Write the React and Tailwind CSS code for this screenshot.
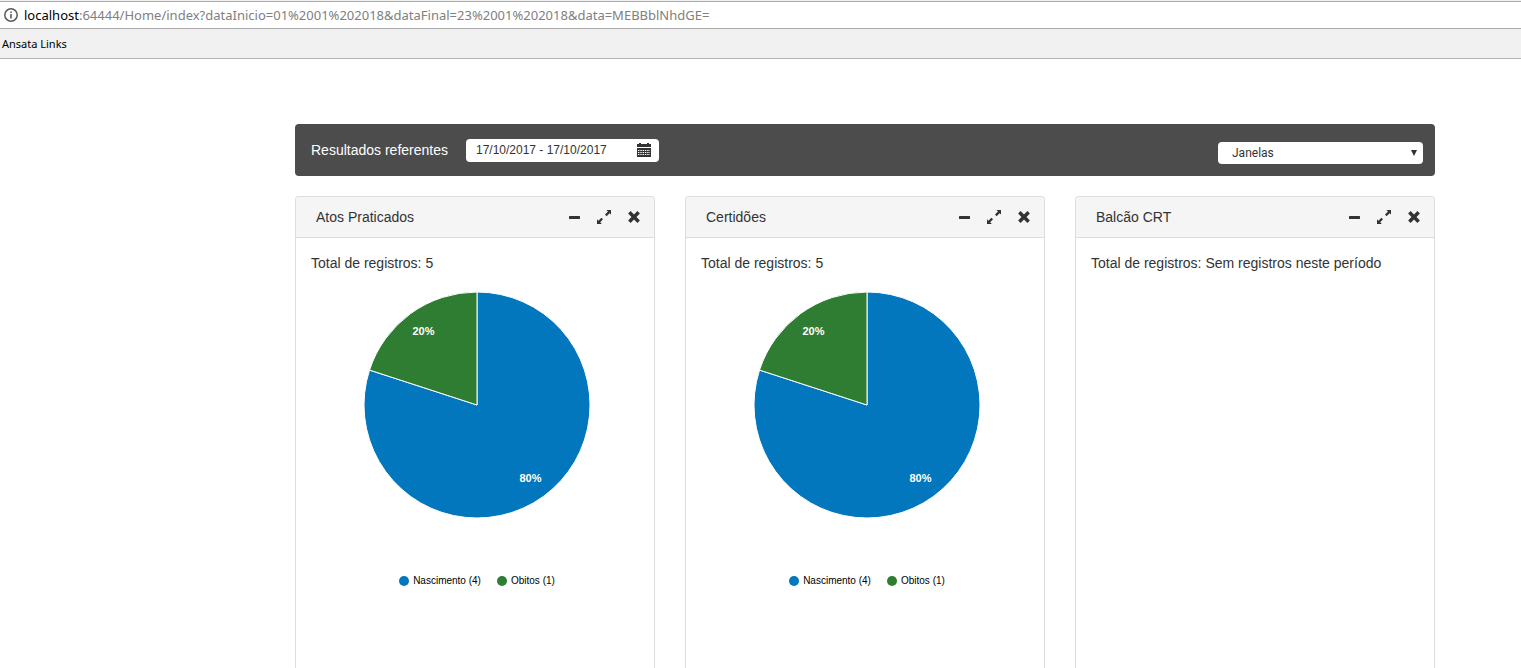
import { useState } from "react";

const COLORS = ["#0277bd", "#2e7d32"];

const registros = [
  { label: "Nascimento", total: 4 },
  { label: "Obitos", total: 1 },
];

const paineis = [
  { titulo: "Atos Praticados", dados: registros },
  { titulo: "Certidões", dados: registros },
  { titulo: "Balcão CRT", dados: [] },
];

const InfoIcon = () => (
  <svg viewBox="0 0 14 14" className="w-3.5 h-3.5 shrink-0" aria-hidden="true">
    <circle cx="7" cy="7" r="6.2" fill="none" stroke="#5a5a5a" strokeWidth="1.5" />
    <path d="M6.2 3.4h1.6V5H6.2zM6.2 6h1.6v4.6H6.2z" fill="#5a5a5a" />
  </svg>
);

const CalendarIcon = () => (
  <svg viewBox="0 0 14 14" className="w-3.5 h-3.5 shrink-0" aria-hidden="true">
    <path d="M0 1h2V0h2v1h6V0h2v1h2v3H0zM0 5h14v9H0z" fill="#333" />
    <path
      d="M1 7.5h12M1 9.5h12M1 11.5h12"
      stroke="#fff"
      strokeWidth="1"
      strokeDasharray="1.4 0.9"
    />
  </svg>
);

const MinusIcon = () => (
  <svg viewBox="0 0 14 14" className="w-3.5 h-3.5" aria-hidden="true">
    <rect x="2" y="6" width="11" height="3" rx="0.5" fill="#333" />
  </svg>
);

const ResizeIcon = () => (
  <svg viewBox="0 0 14 14" className="w-3.5 h-3.5" aria-hidden="true">
    <path
      d="M9.4 0H14v4.6l-1.4-1.4-3 3L8 4.6l3-3zM4.8 14H0V9.2l1.4 1.5 3-3L6 9.3l-2.8 3z"
      fill="#333"
    />
  </svg>
);

const CloseIcon = () => (
  <svg viewBox="0 0 14 14" className="w-3.5 h-3.5" aria-hidden="true">
    <path
      d="M3.6 1.1 7 4.5l3.4-3.4 2.5 2.5L9.5 7l3.4 3.4-2.5 2.5L7 9.5l-3.4 3.4-2.5-2.5L4.5 7 1.1 3.6z"
      fill="#333"
    />
  </svg>
);

const RAIO = 113;

const ponto = (fracao, raio) => {
  const angulo = fracao * 2 * Math.PI;
  return [RAIO + raio * Math.sin(angulo), RAIO - raio * Math.cos(angulo)];
};

const PieChart = ({ dados }) => {
  const soma = dados.reduce((acc, item) => acc + item.total, 0);
  let inicio = 0;

  const fatias = dados.map((item, i) => {
    const parte = item.total / soma;
    const [x1, y1] = ponto(inicio, RAIO);
    const [x2, y2] = ponto(inicio + parte, RAIO);
    const [tx, ty] = ponto(inicio + parte / 2, 91);
    inicio += parte;
    return {
      label: item.label,
      cor: COLORS[i],
      d: `M${RAIO} ${RAIO}L${x1} ${y1}A${RAIO} ${RAIO} 0 ${parte > 0.5 ? 1 : 0} 1 ${x2} ${y2}Z`,
      tx,
      ty,
      texto: `${Math.round(parte * 100)}%`,
    };
  });

  return (
    <div className="flex flex-col items-center pl-1 pt-[19px]">
      <svg viewBox="0 0 226 226" className="w-[226px] h-[226px]" role="img" aria-label="Registros por tipo">
        {fatias.map((f) => (
          <path key={f.label} d={f.d} fill={f.cor} stroke="#fff" strokeWidth="1" />
        ))}
        {fatias.map((f) => (
          <text
            key={f.label}
            x={f.tx}
            y={Math.floor(f.ty + 4)}
            textAnchor="middle"
            fill="#fff"
            className="text-[11px] font-bold"
          >
            {f.texto}
          </text>
        ))}
      </svg>

      {/* Legenda */}
      <ul className="flex gap-4 mt-[54px] text-[10px] leading-[17px] text-black">
        {dados.map((item, i) => (
          <li key={item.label} className="flex items-center gap-1">
            <svg viewBox="0 0 10 10" className="w-2.5 h-2.5" aria-hidden="true">
              <circle cx="5" cy="5" r="5" fill={COLORS[i]} />
            </svg>
            {item.label} ({item.total})
          </li>
        ))}
      </ul>
    </div>
  );
};

const Panel = ({ titulo, dados }) => {
  const total = dados.reduce((acc, item) => acc + item.total, 0);

  return (
    <section className="flex-1 bg-white border border-b-0 border-[#ddd] rounded-t">
      <header className="flex items-center justify-between h-[41px] pl-5 pr-[13px] bg-[#f5f5f5] border-b border-[#ddd] rounded-t">
        <h2>{titulo}</h2>
        <div className="flex gap-4">
          <button type="button" aria-label="Minimizar">
            <MinusIcon />
          </button>
          <button type="button" aria-label="Expandir">
            <ResizeIcon />
          </button>
          <button type="button" aria-label="Fechar">
            <CloseIcon />
          </button>
        </div>
      </header>
      <div className="p-[15px]">
        <p>Total de registros: {total > 0 ? total : "Sem registros neste período"}</p>
        {total > 0 && <PieChart dados={dados} />}
      </div>
    </section>
  );
};

const App = () => {
  const [periodo, setPeriodo] = useState("17/10/2017 - 17/10/2017");

  return (
    <div className="flex flex-col h-screen overflow-hidden bg-white text-sm leading-5 text-[#333] font-['Liberation_Sans',Arial,sans-serif]">
      {/* Barra de endereço */}
      <div className="pt-px shrink-0 bg-[#f1f1f1]">
        <div className="flex items-center gap-1.5 h-7 pl-1 bg-white border-y border-[#aaa] font-['Noto_Sans',sans-serif] text-[13px] text-[#808080]">
          <InfoIcon />
          <p className="whitespace-nowrap">
            <span className="text-black">localhost</span>
            :64444/Home/index?dataInicio=01%2001%202018&amp;dataFinal=23%2001%202018&amp;data=MEBBblNhdGE=
          </p>
        </div>
      </div>
      <nav className="flex items-center h-[30px] pl-0.5 shrink-0 bg-[#f1f1f1] border-b border-[#b5b5b5] font-['Noto_Sans',sans-serif] text-[11px] text-black">
        <a href="#links">Ansata Links</a>
      </nav>

      <main className="flex flex-col flex-1 min-h-0 pl-[209px] pt-[65px]">
        <div className="flex flex-col flex-1 w-full max-w-[1170px] mx-auto px-[15px]">
          {/* Filtros */}
          <div className="flex items-center justify-between h-[52px] shrink-0 pl-4 pr-3 mb-5 bg-[#4c4c4c] rounded">
            <div className="flex items-center gap-[18px]">
              <label htmlFor="periodo" className="text-white">
                Resultados referentes
              </label>
              <div className="flex items-center w-[193px] h-[23px] pl-2.5 pr-2 bg-white rounded">
                <input
                  id="periodo"
                  type="text"
                  value={periodo}
                  onChange={(e) => setPeriodo(e.target.value)}
                  className="flex-1 min-w-0 text-xs outline-none"
                />
                <CalendarIcon />
              </div>
            </div>
            <div className="relative pt-1.5">
              <select
                aria-label="Janelas"
                className="block appearance-none w-[205px] h-[22px] pl-3.5 bg-white rounded text-xs font-['Roboto',sans-serif]"
              >
                <option>Janelas</option>
                {paineis.map((p) => (
                  <option key={p.titulo}>{p.titulo}</option>
                ))}
              </select>
              <svg
                viewBox="0 0 6 6"
                className="absolute right-1.5 bottom-2 w-1.5 h-1.5 pointer-events-none"
                aria-hidden="true"
              >
                <path d="M0 0h6L3 6z" fill="#333" />
              </svg>
            </div>
          </div>

          {/* Painéis */}
          <div className="flex flex-1 gap-[30px]">
            {paineis.map((p) => (
              <Panel key={p.titulo} titulo={p.titulo} dados={p.dados} />
            ))}
          </div>
        </div>
      </main>
    </div>
  );
};

export default App;
